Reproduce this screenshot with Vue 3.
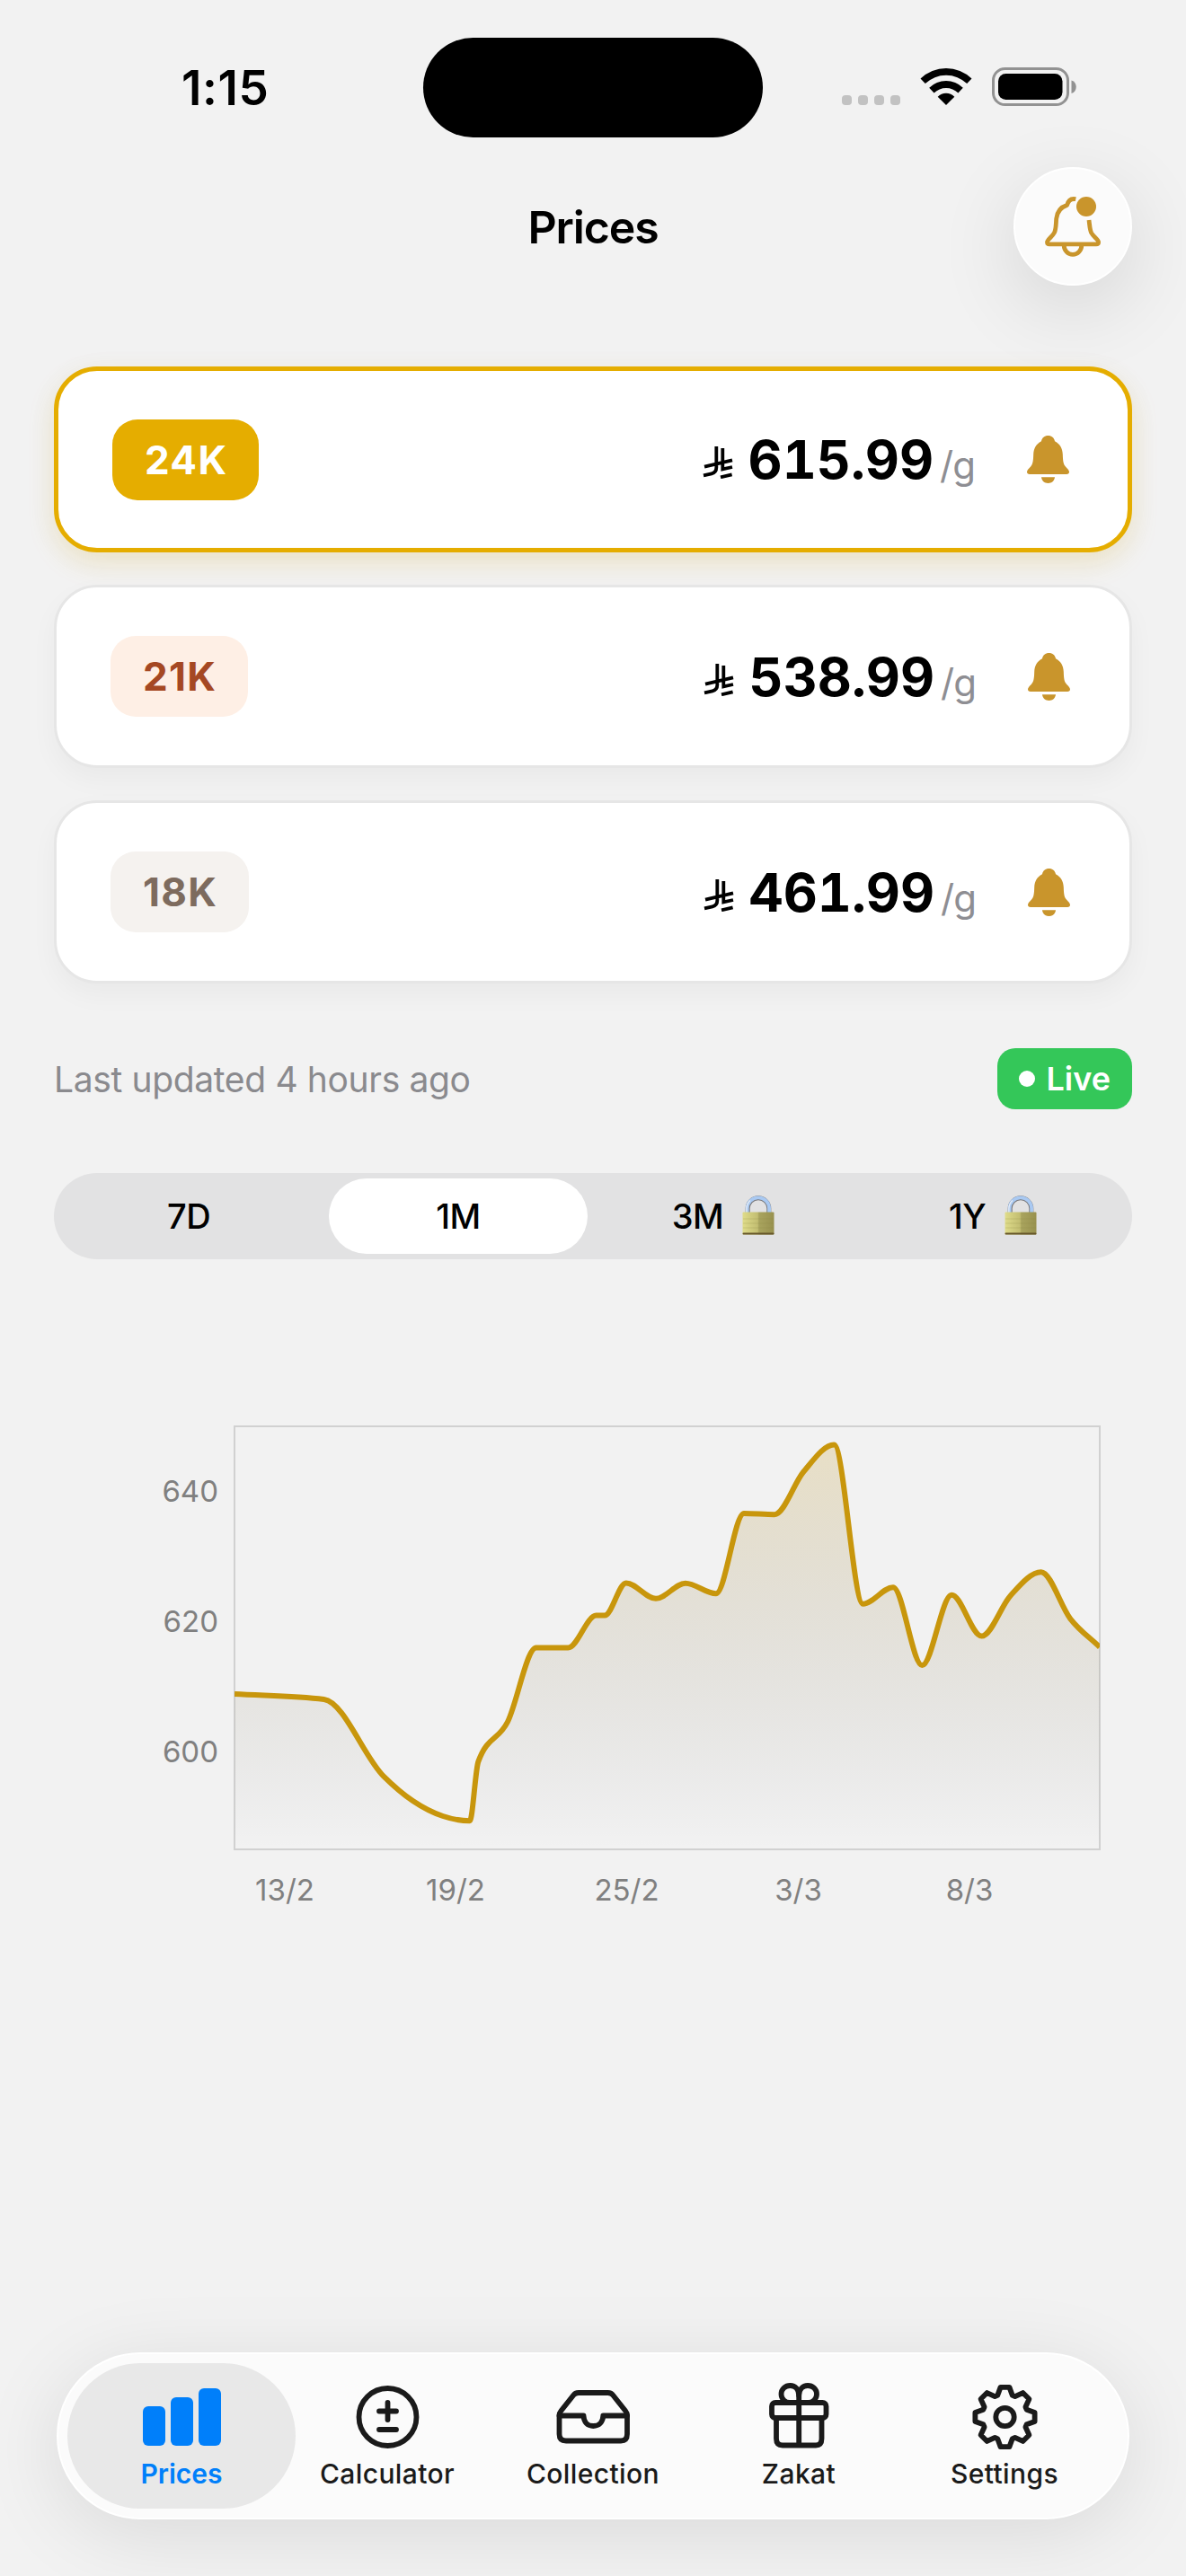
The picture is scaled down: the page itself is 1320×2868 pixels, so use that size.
<template>
  <div class="screen">
    <!-- Status bar -->
    <div class="status-bar">
      <div class="status-time">1:15</div>
      <div class="island"></div>
      <div class="status-icons">
        <div class="cell-dots">
          <span v-for="n in 4" :key="n"></span>
        </div>
        <svg class="wifi" viewBox="0 0 58 42">
          <path d="M0.5 12.5a41 41 0 0 1 57 0l-5.3 5.6a33.5 33.5 0 0 0-46.4 0z" />
          <path d="M10.2 22.7a26.800 26.800 0 0 1 37.600 0l-5.400 5.700a19.300 19.300 0 0 0-26.800 0z" />
          <path d="M19.700 32.700a13 13 0 0 1 18.600 0L29 42z" />
        </svg>
        <svg class="battery" viewBox="0 0 94 43">
          <rect x="1.5" y="1.5" width="83" height="40" rx="13" fill="none" stroke="#929292" stroke-width="3" />
          <rect x="7" y="7" width="71.500" height="29" rx="8.500" />
          <path d="M88.500 14.500c7 2 7 12.500 0 14.500z" fill="#929292" />
        </svg>
      </div>
    </div>

    <!-- Header -->
    <header class="header">
      <h1 class="title">Prices</h1>
      <button class="alert-button" aria-label="Price alerts">
        <svg viewBox="0 0 62 67">
          <g fill="none" stroke="#c9952c" stroke-width="4.8" stroke-linejoin="round">
            <path d="M34.3 2.7C29.5 1.7 26 4 24.6 9.4C18 11.5 13.6 16.5 12.7 24.5C12.2 30 12.5 36 10.5 40C8.5 44 2.5 48 2.5 50.5Q2.5 52.8 5 52.8H57Q59.6 52.8 59.6 50.5C59.6 48 53.5 44 51.5 40C49.8 36 49.7 31 49 26" />
            <path d="M21.2 54A9.8 10.4 0 0 0 40.8 54" />
          </g>
          <circle cx="46" cy="11" r="11" fill="#c9952c" />
        </svg>
      </button>
    </header>

    <!-- Karat cards -->
    <section class="cards">
      <div
        v-for="card in cards"
        :key="card.karat"
        class="card"
        :class="['card-' + card.karat, { active: card.karat === selectedKarat }]"
        @click="selectedKarat = card.karat"
      >
        <span class="badge">{{ card.karat }}</span>
        <div class="price-row">
          <svg class="riyal" viewBox="0 0 34 38">
            <path d="M15.3 2V25.5Q15.3 31 10 32.3L1 34.3M22.3 4V27.4L33 25M2 24.7L33 17.3M20 36.3L32.6 33.3" />
          </svg>
          <span class="price">{{ card.price }}</span>
          <span class="unit">/g</span>
        </div>
        <svg class="bell" viewBox="0 0 47 53">
          <path d="M23.5 0C27.5 0 30.3 2.5 31 6.2C37 9.5 39.5 14 39.8 21C40 28 40.5 31.5 42.5 34C45 37 47 38.5 47 40.3Q47 43 44 43H3Q0 43 0 40.3C0 38.5 2 37 4.5 34C6.5 31.5 7 28 7.2 21C7.5 14 10 9.5 16 6.2C16.7 2.5 19.5 0 23.5 0Z" />
          <path d="M16 46.3H31C30.5 50.5 27.5 53 23.5 53S16.5 50.5 16 46.3Z" />
        </svg>
      </div>
    </section>

    <!-- Last update -->
    <div class="meta">
      <span class="updated">Last updated 4 hours ago</span>
      <span class="live"><i></i>Live</span>
    </div>

    <!-- Range selector -->
    <div class="segments">
      <button
        v-for="range in ranges"
        :key="range.label"
        class="segment"
        :class="{ selected: range.label === selectedRange }"
        @click="selectRange(range)"
      >
        <span>{{ range.label }}</span>
        <svg v-if="range.locked" class="lock" viewBox="0 0 36 44">
          <defs>
            <linearGradient :id="'body' + range.label">
              <stop offset="0" stop-color="#dfdc8a" />
              <stop offset="0.48" stop-color="#c2bd71" />
              <stop offset="0.52" stop-color="#a9a45e" />
              <stop offset="1" stop-color="#98914f" />
            </linearGradient>
          </defs>
          <path d="M6.2 20V14.5a11.8 11.8 0 0 1 23.6 0V20" fill="none" stroke="#77777a" stroke-width="5" />
          <path d="M5.7 20V14.5a12.2 12.2 0 0 1 24.4 0V20" fill="none" stroke="#a9c9f2" stroke-width="3.8" />
          <path d="M4.9 19V14.5a13 13 0 0 1 4-9" fill="none" stroke="#e9eef5" stroke-width="1.2" />
          <rect x="0.5" y="18.5" width="35" height="25" rx="1" :fill="`url(#body${range.label})`" />
          <path d="M1 26H35M1 31H35M1 36H35" stroke="#8f8a44" stroke-width="0.6" opacity="0.4" />
          <rect x="0.5" y="41.5" width="35" height="2" rx="1" fill="#66562b" />
        </svg>
      </button>
    </div>

    <!-- Chart -->
    <svg class="chart" viewBox="0 0 1200 580">
      <defs>
        <linearGradient id="area" gradientUnits="userSpaceOnUse" x1="0" y1="28" x2="0" y2="499">
          <stop offset="0" stop-color="#c8960c" stop-opacity="0.2" />
          <stop offset="1" stop-color="#000" stop-opacity="0" />
        </linearGradient>
        <clipPath id="plot">
          <rect x="201" y="28" width="963" height="471" />
        </clipPath>
      </defs>
      <rect class="frame" x="201" y="28" width="963" height="471" />
      <g clip-path="url(#plot)">
        <path :d="areaPath" fill="url(#area)" />
        <path class="line" :d="linePath" />
      </g>
      <text v-for="tick in yTicks" :key="tick.label" class="tick tick-y" x="183" :y="tick.y">{{ tick.label }}</text>
      <text v-for="tick in xTicks" :key="tick.label" class="tick tick-x" :x="tick.x" y="556">{{ tick.label }}</text>
    </svg>

    <!-- Tab bar -->
    <nav class="tab-bar">
      <a v-for="tab in tabs" :key="tab" class="tab" :class="{ current: tab === currentTab }" @click="currentTab = tab">
        <svg class="tab-icon" viewBox="0 0 90 76">
          <g v-if="tab === 'Prices'" fill="currentColor">
            <rect x="2" y="26" width="25" height="44" rx="6" />
            <rect x="33" y="16" width="25" height="54" rx="6" />
            <rect x="64" y="6" width="25" height="64" rx="6" />
          </g>
          <g v-else-if="tab === 'Calculator'">
            <circle cx="45.5" cy="38" r="32" />
            <path d="M45.5 22V41M36 31.5H55M36 52H55" />
          </g>
          <g v-else-if="tab === 'Collection'">
            <path d="M7.5 36V57Q7.5 64.5 15 64.5H76Q83 64.5 83 57V36Q83 33.5 81 31L67.5 14Q65.5 11 61.5 11H29Q25 11 23 14L9.5 31Q7.5 33.5 7.5 36Z" />
            <path d="M7.5 36.5H34.5C34.8 44 39 48 45.3 48S56 44 56.3 36.5H83" />
          </g>
          <g v-else-if="tab === 'Zakat'">
            <rect x="15" y="22" width="60.5" height="17" rx="4" />
            <path d="M20 39V62Q20 69.5 27 69.5H64Q70.5 69.5 70.5 62V39M45.2 14V69" />
            <path d="M45.2 14C45.2 7 41 3 35.5 3S25.5 7 25.5 12.5S30 22 35 22M45.2 14C45.2 7 49.5 3 55 3S65 7 65 12.5S60.5 22 55.5 22" />
          </g>
          <g v-else>
            <path :d="gearPath" />
            <circle cx="45.5" cy="38" r="10.2" />
          </g>
        </svg>
        <span class="tab-label">{{ tab }}</span>
      </a>
    </nav>
  </div>
</template>

<script setup>
import { ref } from 'vue'

const selectedKarat = ref('24K')
const selectedRange = ref('1M')
const currentTab = ref('Prices')

const cards = [
  { karat: '24K', price: '615.99' },
  { karat: '21K', price: '538.99' },
  { karat: '18K', price: '461.99' }
]

const ranges = [
  { label: '7D' },
  { label: '1M' },
  { label: '3M', locked: true },
  { label: '1Y', locked: true }
]

const tabs = ['Prices', 'Calculator', 'Collection', 'Zakat', 'Settings']

const yTicks = [
  { label: '640', y: 111.5 },
  { label: '620', y: 256.5 },
  { label: '600', y: 402 }
]

const xTicks = [
  { label: '13/2', x: 257 },
  { label: '19/2', x: 447 },
  { label: '25/2', x: 637.5 },
  { label: '3/3', x: 828.5 },
  { label: '8/3', x: 1019 }
]

const points = [
  [201, 326], [300.6, 332], [366.7, 417.3], [399.5, 445], [433, 462], [462.8, 467.3],
  [472.3, 401.4], [505, 357], [536.7, 274.5], [572.3, 274.5], [603.5, 238.6],
  [613, 238.6], [636.8, 202.4], [670, 219.8], [702.9, 202.7], [736.9, 214.2],
  [768, 125], [802, 126.2], [834.2, 78.8], [868.3, 48.5], [900.5, 225.7],
  [934, 207.2], [966.3, 294.1], [999.2, 215.7], [1032.5, 261.6], [1064.7, 216.4],
  [1098.7, 190.2], [1131.3, 242.3], [1164, 273.8]
]

const linePath = monotonePath(points)
const areaPath = `${linePath}L1164 499H201Z`
const gearPath = buildGear(45.5, 38, 33.5, 25.5)

function selectRange(range) {
  if (!range.locked) {
    selectedRange.value = range.label
  }
}

// monotone cubic interpolation, keeps peaks flat
function monotonePath(pts) {
  const n = pts.length
  const slopes = []
  for (let i = 0; i < n - 1; i++) {
    slopes.push((pts[i + 1][1] - pts[i][1]) / (pts[i + 1][0] - pts[i][0]))
  }
  const tangents = pts.map((p, i) => {
    if (i === 0) return slopes[0]
    if (i === n - 1) return slopes[n - 2]
    const h0 = p[0] - pts[i - 1][0]
    const h1 = pts[i + 1][0] - p[0]
    const s0 = slopes[i - 1]
    const s1 = slopes[i]
    const mean = (s0 * h1 + s1 * h0) / (h0 + h1)
    return (Math.sign(s0) + Math.sign(s1)) * Math.min(Math.abs(s0), Math.abs(s1), 0.5 * Math.abs(mean))
  })
  let d = `M${pts[0][0]} ${pts[0][1]}`
  for (let i = 0; i < n - 1; i++) {
    const [x0, y0] = pts[i]
    const [x1, y1] = pts[i + 1]
    const dx = (x1 - x0) / 3
    d += `C${x0 + dx} ${y0 + dx * tangents[i]} ${x1 - dx} ${y1 - dx * tangents[i + 1]} ${x1} ${y1}`
  }
  return d
}

function buildGear(cx, cy, outer, inner) {
  const pts = []
  for (let k = 0; k < 8; k++) {
    const corners = [[-8.5, outer], [8.5, outer], [19, inner], [26, inner]]
    corners.forEach(([offset, r]) => {
      const a = ((k * 45 + offset - 90) * Math.PI) / 180
      pts.push(`${(cx + r * Math.cos(a)).toFixed(2)} ${(cy + r * Math.sin(a)).toFixed(2)}`)
    })
  }
  return `M${pts.join('L')}Z`
}
</script>

<style>
body {
  background: #f2f2f2;
}
</style>

<style scoped>
* {
  box-sizing: border-box;
}

.screen {
  width: 1320px;
  height: 2868px;
  display: flex;
  flex-direction: column;
  background: #f2f2f2;
  font-family: Inter, 'Liberation Sans', sans-serif;
  color: #000;
  overflow: hidden;
}

button {
  border: none;
  padding: 0;
  font-family: inherit;
  color: inherit;
}

/* Status bar */
.status-bar {
  display: grid;
  grid-template-columns: 471px 378px 471px;
  align-items: center;
  height: 186px;
}

.status-time {
  padding: 9px 0 0 202px;
  font-size: 53px;
  font-weight: 600;
  letter-spacing: 0.6px;
}

.island {
  height: 111px;
  margin-top: 8px;
  border-radius: 56px;
  background: #000;
}

.status-icons {
  display: flex;
  align-items: flex-end;
  padding: 7px 0 0 88px;
}

.cell-dots {
  display: flex;
  gap: 7px;
  margin: 0 22px 1px 0;
}

.cell-dots span {
  width: 11px;
  height: 11px;
  border-radius: 4px;
  background: #c2c2c2;
}

.wifi {
  width: 58px;
  height: 42px;
  margin: 0 22px 1px 0;
}

.battery {
  width: 94px;
  height: 43px;
}

/* Header */
.header {
  display: grid;
  grid-template-columns: 132px 1fr 132px;
  align-items: center;
  height: 132px;
  margin: 0 60px 90px;
}

.title {
  grid-column: 2;
  margin: 2px 0 0;
  font-size: 50px;
  font-weight: 600;
  letter-spacing: -1.1px;
  text-align: center;
}

.alert-button {
  display: flex;
  justify-content: center;
  align-items: center;
  width: 132px;
  height: 132px;
  border: 2px solid #fff;
  border-radius: 50%;
  background: #fbfbfb;
  box-shadow: 0 24px 90px rgba(0, 0, 0, 0.12);
}

.alert-button svg {
  width: 62px;
  height: 67px;
}

/* Cards */
.cards {
  display: flex;
  flex-direction: column;
  gap: 36px;
  margin: 0 60px;
}

.card {
  display: flex;
  align-items: center;
  height: 204px;
  padding: 0 66px 0 60px;
  border: 3px solid #e6e6e6;
  border-radius: 48px;
  background: #fff;
  box-shadow: 0 12px 30px rgba(0, 0, 0, 0.04);
}

.card.active {
  height: 207px;
  border: 5px solid #e5ad00;
  padding-right: 65px;
  box-shadow: 0 12px 30px rgba(229, 173, 0, 0.16), 0 6px 40px rgba(0, 0, 0, 0.03);
}

.badge {
  height: 90px;
  padding: 0 35px 0 36px;
  border-radius: 28px;
  font-size: 44px;
  font-weight: 700;
  line-height: 90px;
  letter-spacing: 1.3px;
}

.card-24K .badge {
  background: #e5ad00;
  color: #fff;
}

.card-21K .badge {
  background: #feefe5;
  color: #a54823;
}

.card-18K .badge {
  background: #f5f2ef;
  color: #7d6b5e;
}

.price-row {
  display: flex;
  align-items: baseline;
  margin-left: auto;
}

.riyal {
  width: 34px;
  height: 38px;
  margin-right: 17px;
  fill: none;
  stroke: #000;
  stroke-width: 3.8;
}

.price {
  font-size: 59px;
  font-weight: 700;
  font-feature-settings: 'tnum';
}

.unit {
  margin-left: 7px;
  font-size: 42px;
  letter-spacing: -1px;
  color: #8e8e93;
}

.bell {
  width: 47px;
  height: 53px;
  margin-left: 58px;
  fill: #c9952c;
}

/* Last update */
.meta {
  display: flex;
  justify-content: space-between;
  align-items: center;
  height: 68px;
  margin: 72px 60px 0;
}

.updated {
  font-size: 39px;
  letter-spacing: -0.35px;
  color: #8a8a8e;
}

.live {
  display: flex;
  align-items: center;
  gap: 12px;
  height: 68px;
  padding: 0 24px;
  border-radius: 20px;
  background: #34c759;
  color: #fff;
  font-size: 36px;
  font-weight: 600;
}

.live i {
  width: 18px;
  height: 18px;
  border-radius: 50%;
  background: #fff;
}

/* Range selector */
.segments {
  display: grid;
  grid-template-columns: repeat(4, 288px);
  column-gap: 12px;
  height: 96px;
  margin: 71px 60px 0;
  padding: 6px;
  border-radius: 48px;
  background: #e2e2e3;
}

.segment {
  display: flex;
  justify-content: center;
  align-items: center;
  border-radius: 42px;
  background: transparent;
  font-size: 38px;
  font-weight: 500;
  letter-spacing: -0.5px;
}

.segment.selected {
  background: #fff;
}

.lock {
  width: 36px;
  height: 44px;
  margin: 0 10px 3px 21px;
}

/* Chart */
.chart {
  width: 1200px;
  height: 580px;
  margin: 158px 60px 0;
}

.frame {
  fill: none;
  stroke: #d1d1d1;
  stroke-width: 2;
}

.line {
  fill: none;
  stroke: #c8960c;
  stroke-width: 6;
  stroke-linejoin: round;
}

.tick {
  font-size: 33px;
  fill: #808080;
}

.tick-y {
  text-anchor: end;
}

.tick-x {
  text-anchor: middle;
}

/* Tab bar */
.tab-bar {
  display: flex;
  width: 1194px;
  height: 186px;
  margin: auto 63px 63px;
  padding: 10px;
  border: 2px solid #fff;
  border-radius: 93px;
  background: #fbfbfb;
  box-shadow: 0 16px 90px rgba(0, 0, 0, 0.1);
}

.tab {
  display: flex;
  flex-direction: column;
  align-items: center;
  flex: none;
  width: 254px;
  height: 162px;
  padding-top: 22px;
  border-radius: 81px;
  color: #1a1a1a;
}

.tab + .tab {
  margin-left: -25px;
}

.tab.current {
  background: #e8e8e8;
  color: #007ffa;
}

.tab-icon {
  width: 90px;
  height: 76px;
}

.tab-icon g:not([fill]) {
  fill: none;
  stroke: currentColor;
  stroke-width: 5.8;
  stroke-linecap: round;
  stroke-linejoin: round;
}

.tab-label {
  margin-top: 7px;
  font-size: 30px;
  font-weight: 500;
  line-height: 36px;
  letter-spacing: 0.4px;
}

.current .tab-label {
  font-weight: 600;
  letter-spacing: 0;
}
</style>
